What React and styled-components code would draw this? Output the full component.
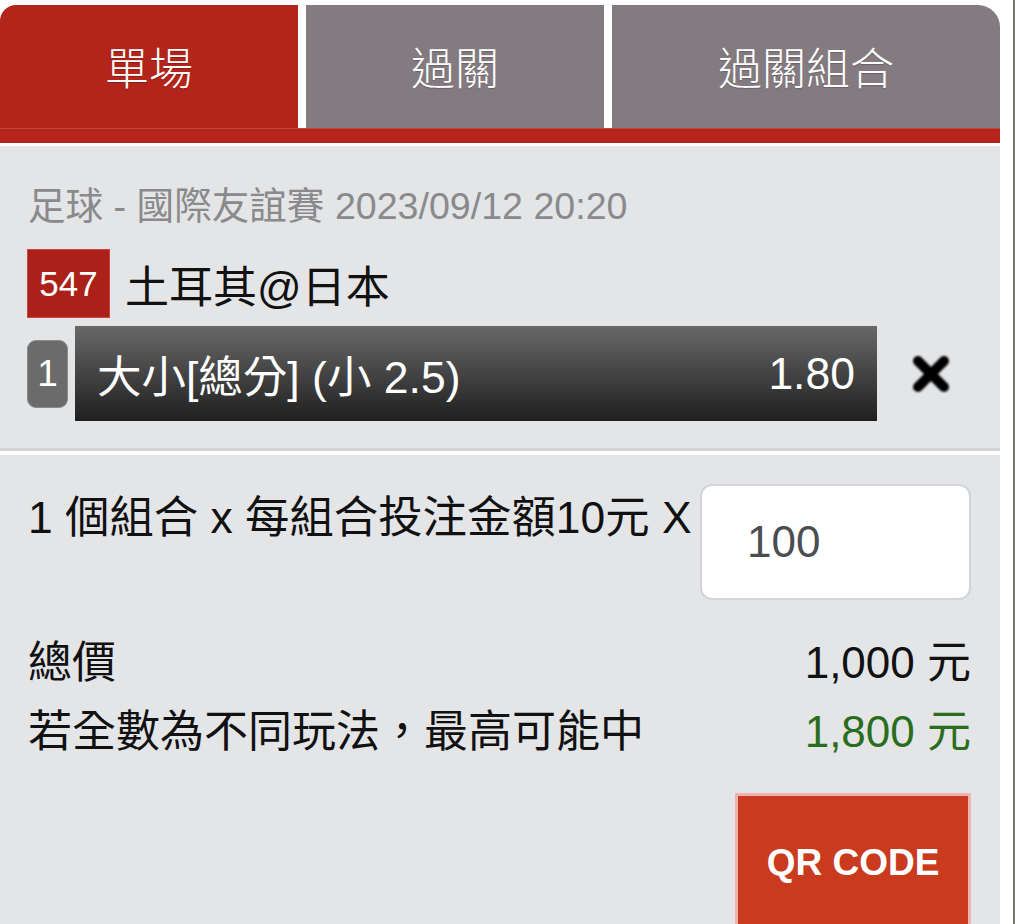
import styled, { createGlobalStyle } from "styled-components";

const GlobalStyle = createGlobalStyle`
  html, body {
    margin: 0;
    padding: 0;
    background: #ffffff;
  }
  body {
    font-family: "Liberation Sans", "Noto Sans CJK TC", sans-serif;
    overflow: hidden;
  }
`;

const Page = styled.div`
  width: 1013px;
  border-right: 2px solid #74746c;
  min-height: 924px;
`;

const Panel = styled.div`
  width: 1000px;
  padding-top: 5px;
`;

const Tabs = styled.div`
  display: grid;
  grid-template-columns: 298px 298px 1fr;
  column-gap: 8px;
  height: 123px;
  background: #ffffff;
  border-radius: 16px 22px 0 0;
  overflow: hidden;
`;

const Tab = styled.div`
  display: flex;
  align-items: center;
  justify-content: center;
  padding-bottom: 2px;
  background: ${(p) => (p.$active ? "#b3241b" : "#847b80")};
  color: #ffffff;
  font-size: 44px;
  font-weight: 300;
  text-shadow: 0 1px 1px rgba(0, 0, 0, 0.2);
`;

const RedBar = styled.div`
  height: 14px;
  background: #b5251c;
  border-top: 1px solid #c2423a;
  border-bottom: 3px solid #ffffff;
`;

const Section = styled.div`
  background: #e4e5e7;
  padding: ${(p) => p.$pad};
  border-bottom: ${(p) => p.$bottom || "none"};
  border-top: ${(p) => p.$top || "none"};
`;

const MatchInfo = styled.div`
  color: #8a8a8c;
  font-size: 37.6px;
  line-height: 44px;
  padding-left: 28px;
`;

const TeamRow = styled.div`
  display: flex;
  align-items: center;
  margin-top: 21px;
  padding-left: 27px;
`;

const MatchNo = styled.div`
  width: 83px;
  height: 69px;
  box-sizing: border-box;
  display: flex;
  align-items: center;
  justify-content: center;
  background: #ab2019;
  border: 1px solid #c7463f;
  color: #ffffff;
  font-size: 35px;
`;

const Teams = styled.div`
  margin-left: 15px;
  font-size: 44px;
  color: #111111;
`;

const BetRow = styled.div`
  display: flex;
  align-items: center;
  margin-top: 8px;
  padding-left: 27px;
`;

const BetIndex = styled.div`
  width: 41px;
  height: 68px;
  box-sizing: border-box;
  display: flex;
  align-items: center;
  justify-content: center;
  background: #6b6b6b;
  border: 1px solid #8a8a8a;
  border-radius: 9px;
  color: #ffffff;
  font-size: 37px;
  margin-right: 7px;
`;

const BetBar = styled.div`
  width: 802px;
  height: 95px;
  box-sizing: border-box;
  display: flex;
  align-items: center;
  justify-content: space-between;
  padding: 0 22px;
  background: linear-gradient(#686868, #1f1f1f);
  color: #ffffff;
  font-size: 44.5px;
`;

const RemoveButton = styled.div`
  margin-left: 33px;
  width: 42px;
  height: 42px;
  display: flex;
  filter: blur(0.8px);
`;

const StakeRow = styled.div`
  display: flex;
  justify-content: space-between;
  align-items: flex-start;
`;

const StakeText = styled.div`
  margin-top: 7px;
  font-size: 44.4px;
  line-height: 53px;
  color: #111111;
`;

const StakeInput = styled.div`
  width: 271px;
  height: 116px;
  box-sizing: border-box;
  display: flex;
  align-items: center;
  padding-left: 45px;
  background: #ffffff;
  border: 2px solid #d2d4d8;
  border-radius: 12px;
  font-size: 44px;
  color: #4a4d52;
`;

const TotalRow = styled.div`
  display: flex;
  justify-content: space-between;
  font-size: 44px;
  line-height: 53px;
  color: #111111;
  margin-top: ${(p) => p.$gap};
`;

const Amount = styled.span`
  color: ${(p) => p.$color || "#111111"};
`;

const ButtonRow = styled.div`
  display: flex;
  justify-content: flex-end;
  margin-top: 35px;
`;

const QrButton = styled.div`
  width: 236px;
  height: 140px;
  box-sizing: border-box;
  display: flex;
  align-items: center;
  justify-content: center;
  background: #c93a1f;
  border: 3px solid #f1b3b0;
  color: #ffffff;
  font-size: 37px;
  font-weight: bold;
`;

const CloseIcon = () => (
  <svg width="42" height="42" viewBox="0 0 42 42">
    <path
      d="M8 8 L34 34 M34 8 L8 34"
      stroke="#000"
      strokeWidth="10"
      strokeLinecap="round"
      fill="none"
    />
  </svg>
);

const App = () => {
  return (
    <Page>
      <GlobalStyle />
      <Panel>
        <Tabs>
          <Tab $active>單場</Tab>
          <Tab>過關</Tab>
          <Tab>過關組合</Tab>
        </Tabs>
        <RedBar />
        <Section $pad="38px 0 27px" $bottom="3px solid #d3d4d6">
          <MatchInfo>足球 - 國際友誼賽 2023/09/12 20:20</MatchInfo>
          <TeamRow>
            <MatchNo>547</MatchNo>
            <Teams>土耳其@日本</Teams>
          </TeamRow>
          <BetRow>
            <BetIndex>1</BetIndex>
            <BetBar>
              <span>大小[總分] (小 2.5)</span>
              <span>1.80</span>
            </BetBar>
            <RemoveButton>
              <CloseIcon />
            </RemoveButton>
          </BetRow>
        </Section>
        <Section $pad="29px 29px 40px 28px" $top="4px solid #ffffff">
          <StakeRow>
            <StakeText>1 個組合 x 每組合投注金額10元 X</StakeText>
            <StakeInput>100</StakeInput>
          </StakeRow>
          <TotalRow $gap="36px">
            <span>總價</span>
            <Amount>1,000 元</Amount>
          </TotalRow>
          <TotalRow $gap="16px">
            <span>若全數為不同玩法，最高可能中</span>
            <Amount $color="#2a6e1d">1,800 元</Amount>
          </TotalRow>
          <ButtonRow>
            <QrButton>QR CODE</QrButton>
          </ButtonRow>
        </Section>
      </Panel>
    </Page>
  );
};

export default App;
